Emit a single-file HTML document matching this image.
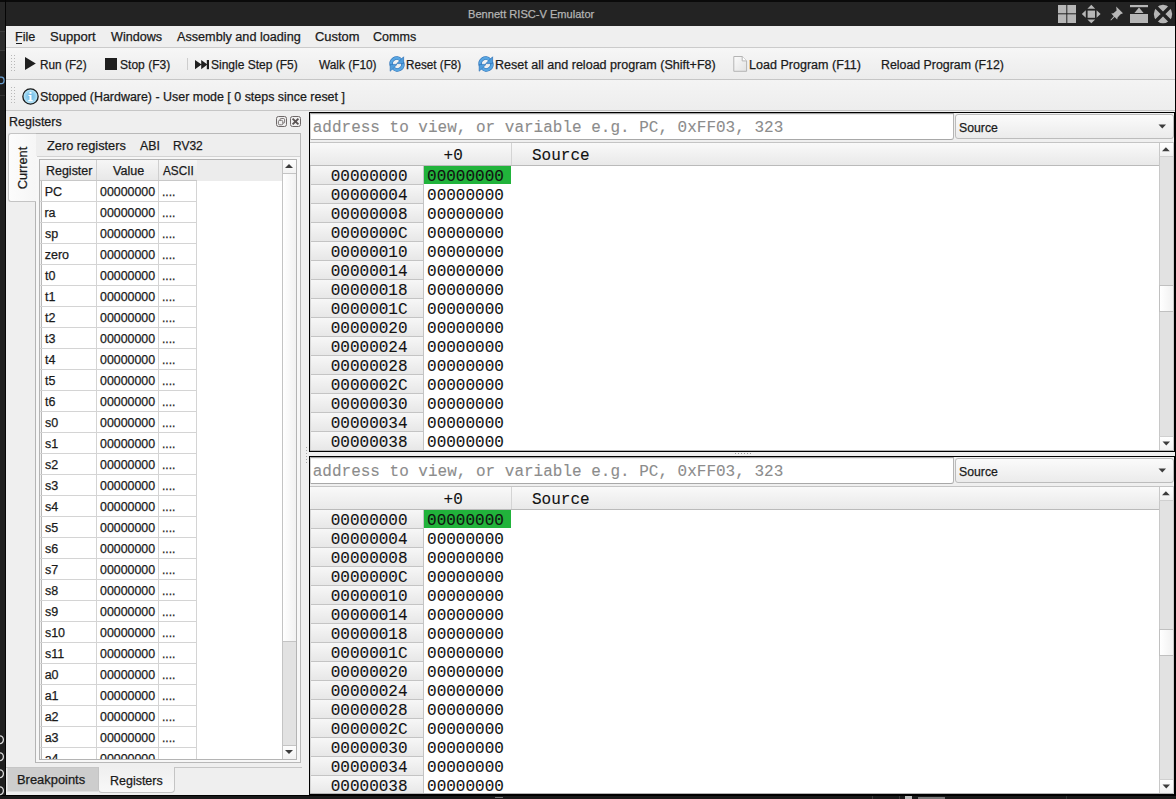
<!DOCTYPE html>
<html><head><meta charset="utf-8"><style>
html,body{margin:0;padding:0;width:1176px;height:799px;overflow:hidden;background:#1b1b1b}
div,span,svg{position:absolute;display:block}
span{white-space:nowrap;-webkit-text-stroke:0.25px currentColor}
</style></head><body>
<div style="left:0px;top:0px;width:6px;height:799px;background:#1f1f1f"></div>
<div style="left:0px;top:795px;width:1176px;height:1px;background:#000"></div>
<div style="left:0px;top:796px;width:1176px;height:3px;background:#1a1a1a"></div>
<div style="left:0px;top:0px;width:5px;height:31px;background:#262626"></div>
<div style="left:0px;top:31px;width:5px;height:1px;background:#3e3e3e"></div>
<div style="left:0px;top:32px;width:5px;height:18px;background:#2c2c2c"></div>
<div style="left:0px;top:50px;width:5px;height:1px;background:#3e3e3e"></div>
<div style="left:0px;top:51px;width:5px;height:9px;background:#242424"></div>
<div style="left:0px;top:60px;width:5px;height:30px;background:#1e1e1e"></div>
<svg style="left:0px;top:75.5px" width="5" height="9"><path d="M0 1.2 H1.5 A2.6 3.2 0 0 1 1.5 7.6 H0" fill="none" stroke="#6a9fd0" stroke-width="1.2"/></svg>
<div style="left:0px;top:95px;width:5px;height:1px;background:#333"></div>
<svg style="left:0px;top:734.5px" width="5" height="10"><path d="M0 0.8 A3.4 3.9 0 0 1 0 8.6" fill="none" stroke="#d8d8d8" stroke-width="1.3"/></svg>
<svg style="left:0px;top:751.5px" width="5" height="10"><path d="M0 0.8 A3.4 3.9 0 0 1 0 8.6" fill="none" stroke="#d8d8d8" stroke-width="1.3"/></svg>
<svg style="left:0px;top:769.0px" width="5" height="10"><path d="M0 0.8 A3.4 3.9 0 0 1 0 8.6" fill="none" stroke="#d8d8d8" stroke-width="1.3"/></svg>
<svg style="left:0px;top:785.5px" width="5" height="10"><path d="M0 0.8 A3.4 3.9 0 0 1 0 8.6" fill="none" stroke="#d8d8d8" stroke-width="1.3"/></svg>
<div style="left:872px;top:796px;width:1px;height:3px;background:#3a3a3a"></div>
<div style="left:899px;top:796px;width:1px;height:3px;background:#3a3a3a"></div>
<div style="left:905px;top:796px;width:7px;height:3px;background:#bdbdbd"></div>
<div style="left:918px;top:797px;width:27px;height:2px;background:#7a7a7a"></div>
<div style="left:1066px;top:796px;width:1px;height:3px;background:#333"></div>
<div style="left:495px;top:797px;width:8px;height:1px;background:#777"></div>
<div style="left:0px;top:0px;width:1176px;height:2px;background:#0a0a0a"></div>
<div style="left:5px;top:0px;width:1px;height:796px;background:#050505"></div>
<div style="left:6px;top:2px;width:1170px;height:24px;background:#232323"></div>
<span style="left:467.79px;top:8.60px;font-size:11.1px;line-height:11.1px;font-family:'Liberation Sans', sans-serif;color:#b4b4b4;transform:scaleX(0.9993);transform-origin:0 0;">Bennett RISC-V Emulator</span>
<svg style="left:1050px;top:0px" width="126" height="26" viewBox="0 0 126 26"><g fill="#b6b6b6"><rect x="8" y="5" width="8.3" height="8.3"/><rect x="17.3" y="5" width="8.7" height="8.3"/><rect x="8" y="14.3" width="8.3" height="8.7"/><rect x="17.3" y="14.3" width="8.7" height="8.7"/><rect x="37.6" y="10.6" width="7.4" height="7.2"/><path d="M41.3 4.8 L45.2 8.8 H37.4Z M41.3 23.2 L45.2 19.4 H37.4Z M31.8 14 L35.8 10.2 V17.8Z M50.6 14 L46.6 10.2 V17.8Z"/><path d="M66.2 6.6 L73 13.2 L70.6 14.2 L67.6 17.4 L67.2 19.6 L64.6 17 L61 20.6 L60.4 20 L63.8 16.2 L61.2 13.6 L63.4 13.2 L66.6 10.4Z"/><rect x="80" y="5" width="18" height="2.2"/><path d="M89 7.6 L93.6 12.9 H84.4Z"/><rect x="80" y="14" width="18" height="9"/><circle cx="113" cy="14" r="9.2"/></g><path d="M106 7 L120 21 M120 7 L106 21" stroke="#232323" stroke-width="3.4"/></svg>
<div style="left:6px;top:26px;width:1170px;height:769px;background:#efefef"></div>
<div style="left:6px;top:47px;width:1170px;height:1px;background:#cbcbcb"></div>
<span style="left:15.47px;top:31.42px;font-size:12.5px;line-height:12.5px;font-family:'Liberation Sans', sans-serif;color:#1a1a1a;transform:scaleX(1.0067);transform-origin:0 0;">File</span>
<span style="left:50.43px;top:31.42px;font-size:12.5px;line-height:12.5px;font-family:'Liberation Sans', sans-serif;color:#1a1a1a;transform:scaleX(1.0429);transform-origin:0 0;">Support</span>
<span style="left:111.35px;top:31.42px;font-size:12.5px;line-height:12.5px;font-family:'Liberation Sans', sans-serif;color:#1a1a1a;transform:scaleX(1.0080);transform-origin:0 0;">Windows</span>
<span style="left:177.07px;top:31.42px;font-size:12.5px;line-height:12.5px;font-family:'Liberation Sans', sans-serif;color:#1a1a1a;transform:scaleX(1.0117);transform-origin:0 0;">Assembly and loading</span>
<span style="left:314.76px;top:31.42px;font-size:12.5px;line-height:12.5px;font-family:'Liberation Sans', sans-serif;color:#1a1a1a;transform:scaleX(1.0306);transform-origin:0 0;">Custom</span>
<span style="left:372.67px;top:31.42px;font-size:12.5px;line-height:12.5px;font-family:'Liberation Sans', sans-serif;color:#1a1a1a;transform:scaleX(1.0030);transform-origin:0 0;">Comms</span>
<div style="left:16px;top:43px;width:6px;height:1px;background:#1a1a1a"></div>
<div style="left:6px;top:48px;width:1170px;height:31px;background:linear-gradient(#f6f6f6,#ececec)"></div>
<div style="left:6px;top:79px;width:1170px;height:1px;background:#c6c6c6"></div>
<div style="left:11px;top:55px;width:1px;height:1px;background:#b8b8b8"></div>
<div style="left:14px;top:55px;width:1px;height:1px;background:#b8b8b8"></div>
<div style="left:11px;top:58px;width:1px;height:1px;background:#b8b8b8"></div>
<div style="left:14px;top:58px;width:1px;height:1px;background:#b8b8b8"></div>
<div style="left:11px;top:61px;width:1px;height:1px;background:#b8b8b8"></div>
<div style="left:14px;top:61px;width:1px;height:1px;background:#b8b8b8"></div>
<div style="left:11px;top:64px;width:1px;height:1px;background:#b8b8b8"></div>
<div style="left:14px;top:64px;width:1px;height:1px;background:#b8b8b8"></div>
<div style="left:11px;top:67px;width:1px;height:1px;background:#b8b8b8"></div>
<div style="left:14px;top:67px;width:1px;height:1px;background:#b8b8b8"></div>
<div style="left:11px;top:70px;width:1px;height:1px;background:#b8b8b8"></div>
<div style="left:14px;top:70px;width:1px;height:1px;background:#b8b8b8"></div>
<svg style="left:25px;top:57px" width="12" height="14"><path d="M0 0 L10.8 6.5 L0 13Z" fill="#1f1f1f"/></svg>
<span style="left:39.53px;top:59.42px;font-size:12.5px;line-height:12.5px;font-family:'Liberation Sans', sans-serif;color:#1a1a1a;transform:scaleX(0.9448);transform-origin:0 0;">Run (F2)</span>
<div style="left:105px;top:58px;width:12px;height:12px;background:#1f1f1f"></div>
<span style="left:120.47px;top:59.42px;font-size:12.5px;line-height:12.5px;font-family:'Liberation Sans', sans-serif;color:#1a1a1a;transform:scaleX(0.9646);transform-origin:0 0;">Stop (F3)</span>
<div style="left:187px;top:58px;width:1px;height:12px;background:#cdcdcd"></div>
<svg style="left:194.8px;top:59.8px" width="16" height="10"><path d="M0 0 L6.6 4.6 L0 9.2Z M6.2 0 L12.4 4.6 L6.2 9.2Z" fill="#1f1f1f"/><rect x="11.8" y="0" width="2.2" height="9.2" fill="#1f1f1f"/></svg>
<span style="left:211.47px;top:59.42px;font-size:12.5px;line-height:12.5px;font-family:'Liberation Sans', sans-serif;color:#1a1a1a;transform:scaleX(0.9607);transform-origin:0 0;">Single Step (F5)</span>
<span style="left:319.15px;top:59.42px;font-size:12.5px;line-height:12.5px;font-family:'Liberation Sans', sans-serif;color:#1a1a1a;transform:scaleX(0.9490);transform-origin:0 0;">Walk (F10)</span>
<svg style="left:388.5px;top:56px" width="16" height="16" viewBox="0 0 16 16"><path d="M2.6 9.6 A5.4 5.4 0 0 1 11.6 3.9" fill="none" stroke="#2f72b8" stroke-width="3.6"/><path d="M13.4 6.4 A5.4 5.4 0 0 1 4.4 12.1" fill="none" stroke="#2f72b8" stroke-width="3.6"/><path d="M2.6 9.6 A5.4 5.4 0 0 1 11.6 3.9" fill="none" stroke="#58a6e2" stroke-width="2.4"/><path d="M13.4 6.4 A5.4 5.4 0 0 1 4.4 12.1" fill="none" stroke="#58a6e2" stroke-width="2.4"/><path d="M14.6 0.8 V7.6 H7.8Z" fill="#4f9ddc" stroke="#2f72b8" stroke-width="0.7"/><path d="M1.2 15.2 V8.4 H8Z" fill="#4f9ddc" stroke="#2f72b8" stroke-width="0.7"/></svg>
<span style="left:405.54px;top:59.42px;font-size:12.5px;line-height:12.5px;font-family:'Liberation Sans', sans-serif;color:#1a1a1a;transform:scaleX(0.9345);transform-origin:0 0;">Reset (F8)</span>
<svg style="left:478px;top:56px" width="16" height="16" viewBox="0 0 16 16"><path d="M2.6 9.6 A5.4 5.4 0 0 1 11.6 3.9" fill="none" stroke="#2f72b8" stroke-width="3.6"/><path d="M13.4 6.4 A5.4 5.4 0 0 1 4.4 12.1" fill="none" stroke="#2f72b8" stroke-width="3.6"/><path d="M2.6 9.6 A5.4 5.4 0 0 1 11.6 3.9" fill="none" stroke="#58a6e2" stroke-width="2.4"/><path d="M13.4 6.4 A5.4 5.4 0 0 1 4.4 12.1" fill="none" stroke="#58a6e2" stroke-width="2.4"/><path d="M14.6 0.8 V7.6 H7.8Z" fill="#4f9ddc" stroke="#2f72b8" stroke-width="0.7"/><path d="M1.2 15.2 V8.4 H8Z" fill="#4f9ddc" stroke="#2f72b8" stroke-width="0.7"/></svg>
<span style="left:495.17px;top:59.42px;font-size:12.5px;line-height:12.5px;font-family:'Liberation Sans', sans-serif;color:#1a1a1a;transform:scaleX(1.0037);transform-origin:0 0;">Reset all and reload program (Shift+F8)</span>
<svg style="left:732px;top:56px" width="16" height="16"><defs><linearGradient id="dg" x1="0" y1="0" x2="1" y2="1"><stop offset="0" stop-color="#fbfbfb"/><stop offset="1" stop-color="#e2e2e2"/></linearGradient></defs><path d="M1.8 0.5 H10.2 L14.6 4.9 V15.3 H1.8Z" fill="url(#dg)" stroke="#b4b4b4"/><path d="M10.2 0.5 V4.9 H14.6" fill="#fff" stroke="#b4b4b4"/></svg>
<span style="left:749.07px;top:59.42px;font-size:12.5px;line-height:12.5px;font-family:'Liberation Sans', sans-serif;color:#1a1a1a;transform:scaleX(1.0034);transform-origin:0 0;">Load Program (F11)</span>
<span style="left:881.49px;top:59.42px;font-size:12.5px;line-height:12.5px;font-family:'Liberation Sans', sans-serif;color:#1a1a1a;transform:scaleX(0.9888);transform-origin:0 0;">Reload Program (F12)</span>
<div style="left:6px;top:80px;width:1170px;height:30px;background:linear-gradient(#f4f4f4,#ededed)"></div>
<div style="left:6px;top:110px;width:1170px;height:1px;background:#c6c6c6"></div>
<div style="left:11px;top:87px;width:1px;height:1px;background:#b8b8b8"></div>
<div style="left:14px;top:87px;width:1px;height:1px;background:#b8b8b8"></div>
<div style="left:11px;top:90px;width:1px;height:1px;background:#b8b8b8"></div>
<div style="left:14px;top:90px;width:1px;height:1px;background:#b8b8b8"></div>
<div style="left:11px;top:93px;width:1px;height:1px;background:#b8b8b8"></div>
<div style="left:14px;top:93px;width:1px;height:1px;background:#b8b8b8"></div>
<div style="left:11px;top:96px;width:1px;height:1px;background:#b8b8b8"></div>
<div style="left:14px;top:96px;width:1px;height:1px;background:#b8b8b8"></div>
<div style="left:11px;top:99px;width:1px;height:1px;background:#b8b8b8"></div>
<div style="left:14px;top:99px;width:1px;height:1px;background:#b8b8b8"></div>
<div style="left:11px;top:102px;width:1px;height:1px;background:#b8b8b8"></div>
<div style="left:14px;top:102px;width:1px;height:1px;background:#b8b8b8"></div>
<svg style="left:21.6px;top:87.6px" width="17" height="17" viewBox="-0.4 -0.4 16.8 16.8"><defs><radialGradient id="ig" cx="0.5" cy="0.5" r="0.5"><stop offset="0" stop-color="#6fb6e6"/><stop offset="0.55" stop-color="#8ccdee"/><stop offset="1" stop-color="#c4ecfa"/></radialGradient></defs><circle cx="8" cy="8" r="7.55" fill="url(#ig)" stroke="#1a1a1a" stroke-width="1.3"/><rect x="7" y="3.5" width="2" height="1.8" fill="#fff"/><path d="M6 6.5 H9 V11.5 H10.2 V12.6 H5.8 V11.5 H7 V7.6 H6Z" fill="#fff"/></svg>
<span style="left:40.15px;top:91.42px;font-size:12.5px;line-height:12.5px;font-family:'Liberation Sans', sans-serif;color:#1a1a1a;transform:scaleX(0.9952);transform-origin:0 0;">Stopped (Hardware) - User mode [ 0 steps since reset ]</span>
<span style="left:9.38px;top:116.42px;font-size:12.5px;line-height:12.5px;font-family:'Liberation Sans', sans-serif;color:#1a1a1a;transform:scaleX(0.9976);transform-origin:0 0;">Registers</span>
<svg style="left:276px;top:116px" width="26" height="12"><rect x="0.5" y="0.5" width="10" height="10" rx="2" fill="none" stroke="#6e6868"/><rect x="4" y="2.5" width="4.6" height="4.6" rx="1.2" fill="none" stroke="#6e6868" stroke-width="0.9"/><rect x="2.4" y="4.4" width="4.4" height="4.4" rx="1.2" fill="#efefef" stroke="#6e6868" stroke-width="0.9"/><rect x="14.5" y="0.5" width="10" height="10" rx="2" fill="none" stroke="#6e6868"/><path d="M16.6 2.6 L22.4 8.4 M22.4 2.6 L16.6 8.4" stroke="#5a5454" stroke-width="1.9"/></svg>
<div style="left:35px;top:133px;width:266px;height:630px;background:#f7f7f7;border:1px solid #b8b8b8;border-left:none;box-sizing:border-box"></div>
<div style="left:35px;top:134px;width:1px;height:68px;background:#dcdcdc"></div>
<div style="left:35px;top:201px;width:1px;height:562px;background:#b4b4b4"></div>
<div style="left:8px;top:133px;width:28px;height:69px;background:linear-gradient(90deg,#fcfcfc,#f6f6f6);border:1px solid #c4c4c4;border-right:none;border-radius:3px 0 0 3px;box-sizing:border-box"></div>
<span style="left:9px;top:133.8px;width:27px;height:68px;"><span style="position:absolute;left:50%;top:50%;transform:translate(-50%,-50%) rotate(-90deg) scaleX(1.02);font-size:12.5px;line-height:14px;font-family:'Liberation Sans', sans-serif;color:#1a1a1a;white-space:nowrap">Current</span></span>
<div style="left:36px;top:134px;width:264px;height:22px;background:#eeeeee"></div>
<div style="left:37px;top:156px;width:263px;height:1px;background:#d2d2d2"></div>
<span style="left:46.82px;top:140.42px;font-size:12.5px;line-height:12.5px;font-family:'Liberation Sans', sans-serif;color:#1a1a1a;transform:scaleX(1.0226);transform-origin:0 0;">Zero registers</span>
<span style="left:140.18px;top:140.42px;font-size:12.5px;line-height:12.5px;font-family:'Liberation Sans', sans-serif;color:#1a1a1a;transform:scaleX(0.9855);transform-origin:0 0;">ABI</span>
<span style="left:173.22px;top:140.42px;font-size:12.5px;line-height:12.5px;font-family:'Liberation Sans', sans-serif;color:#1a1a1a;transform:scaleX(0.9558);transform-origin:0 0;">RV32</span>
<div style="left:39px;top:159px;width:258px;height:601px;background:#fff;border:1px solid #b4b4b4;box-sizing:border-box"></div>
<div style="left:40px;top:160px;width:242px;height:21px;background:#ececec"></div>
<div style="left:40px;top:160px;width:157px;height:20px;background:linear-gradient(#f6f6f6,#e8e8e8)"></div>
<div style="left:40px;top:180px;width:157px;height:1px;background:#c8c8c8"></div>
<div style="left:96px;top:160px;width:1px;height:20px;background:#cfcfcf"></div>
<div style="left:158px;top:160px;width:1px;height:20px;background:#cfcfcf"></div>
<span style="left:46.28px;top:165.42px;font-size:12.5px;line-height:12.5px;font-family:'Liberation Sans', sans-serif;color:#1a1a1a;transform:scaleX(0.9972);transform-origin:0 0;">Register</span>
<span style="left:112.65px;top:165.42px;font-size:12.5px;line-height:12.5px;font-family:'Liberation Sans', sans-serif;color:#1a1a1a;transform:scaleX(1.0049);transform-origin:0 0;">Value</span>
<span style="left:162.98px;top:165.42px;font-size:12.5px;line-height:12.5px;font-family:'Liberation Sans', sans-serif;color:#1a1a1a;transform:scaleX(0.9404);transform-origin:0 0;">ASCII</span>
<div style="left:40px;top:181px;width:1px;height:578px;background:#f2f2f2"></div>
<div style="left:41px;top:181px;width:1px;height:578px;background:#b8b8b8"></div>
<div style="left:40px;top:181px;width:242px;height:578px;overflow:hidden">
<div style="left:0px;top:20px;width:157px;height:1px;background:#d4d4d4"></div>
<span style="left:4.68px;top:5.42px;font-size:12.5px;line-height:12.5px;font-family:'Liberation Sans', sans-serif;color:#1a1a1a;">PC</span>
<span style="left:59.63px;top:5.42px;font-size:12.5px;line-height:12.5px;font-family:'Liberation Sans', sans-serif;color:#1a1a1a;transform:scaleX(0.9913);transform-origin:0 0;">00000000</span>
<span style="left:122.11px;top:5.42px;font-size:12.5px;line-height:12.5px;font-family:'Liberation Sans', sans-serif;color:#1a1a1a;transform:scaleX(0.9700);transform-origin:0 0;">....</span>
<div style="left:0px;top:41px;width:157px;height:1px;background:#d4d4d4"></div>
<span style="left:4.38px;top:26.42px;font-size:12.5px;line-height:12.5px;font-family:'Liberation Sans', sans-serif;color:#1a1a1a;">ra</span>
<span style="left:59.63px;top:26.42px;font-size:12.5px;line-height:12.5px;font-family:'Liberation Sans', sans-serif;color:#1a1a1a;transform:scaleX(0.9913);transform-origin:0 0;">00000000</span>
<span style="left:122.11px;top:26.42px;font-size:12.5px;line-height:12.5px;font-family:'Liberation Sans', sans-serif;color:#1a1a1a;transform:scaleX(0.9700);transform-origin:0 0;">....</span>
<div style="left:0px;top:62px;width:157px;height:1px;background:#d4d4d4"></div>
<span style="left:4.88px;top:47.42px;font-size:12.5px;line-height:12.5px;font-family:'Liberation Sans', sans-serif;color:#1a1a1a;">sp</span>
<span style="left:59.63px;top:47.42px;font-size:12.5px;line-height:12.5px;font-family:'Liberation Sans', sans-serif;color:#1a1a1a;transform:scaleX(0.9913);transform-origin:0 0;">00000000</span>
<span style="left:122.11px;top:47.42px;font-size:12.5px;line-height:12.5px;font-family:'Liberation Sans', sans-serif;color:#1a1a1a;transform:scaleX(0.9700);transform-origin:0 0;">....</span>
<div style="left:0px;top:83px;width:157px;height:1px;background:#d4d4d4"></div>
<span style="left:4.70px;top:68.42px;font-size:12.5px;line-height:12.5px;font-family:'Liberation Sans', sans-serif;color:#1a1a1a;">zero</span>
<span style="left:59.63px;top:68.42px;font-size:12.5px;line-height:12.5px;font-family:'Liberation Sans', sans-serif;color:#1a1a1a;transform:scaleX(0.9913);transform-origin:0 0;">00000000</span>
<span style="left:122.11px;top:68.42px;font-size:12.5px;line-height:12.5px;font-family:'Liberation Sans', sans-serif;color:#1a1a1a;transform:scaleX(0.9700);transform-origin:0 0;">....</span>
<div style="left:0px;top:104px;width:157px;height:1px;background:#d4d4d4"></div>
<span style="left:5.03px;top:89.42px;font-size:12.5px;line-height:12.5px;font-family:'Liberation Sans', sans-serif;color:#1a1a1a;">t0</span>
<span style="left:59.63px;top:89.42px;font-size:12.5px;line-height:12.5px;font-family:'Liberation Sans', sans-serif;color:#1a1a1a;transform:scaleX(0.9913);transform-origin:0 0;">00000000</span>
<span style="left:122.11px;top:89.42px;font-size:12.5px;line-height:12.5px;font-family:'Liberation Sans', sans-serif;color:#1a1a1a;transform:scaleX(0.9700);transform-origin:0 0;">....</span>
<div style="left:0px;top:125px;width:157px;height:1px;background:#d4d4d4"></div>
<span style="left:5.03px;top:110.42px;font-size:12.5px;line-height:12.5px;font-family:'Liberation Sans', sans-serif;color:#1a1a1a;">t1</span>
<span style="left:59.63px;top:110.42px;font-size:12.5px;line-height:12.5px;font-family:'Liberation Sans', sans-serif;color:#1a1a1a;transform:scaleX(0.9913);transform-origin:0 0;">00000000</span>
<span style="left:122.11px;top:110.42px;font-size:12.5px;line-height:12.5px;font-family:'Liberation Sans', sans-serif;color:#1a1a1a;transform:scaleX(0.9700);transform-origin:0 0;">....</span>
<div style="left:0px;top:146px;width:157px;height:1px;background:#d4d4d4"></div>
<span style="left:5.03px;top:131.42px;font-size:12.5px;line-height:12.5px;font-family:'Liberation Sans', sans-serif;color:#1a1a1a;">t2</span>
<span style="left:59.63px;top:131.42px;font-size:12.5px;line-height:12.5px;font-family:'Liberation Sans', sans-serif;color:#1a1a1a;transform:scaleX(0.9913);transform-origin:0 0;">00000000</span>
<span style="left:122.11px;top:131.42px;font-size:12.5px;line-height:12.5px;font-family:'Liberation Sans', sans-serif;color:#1a1a1a;transform:scaleX(0.9700);transform-origin:0 0;">....</span>
<div style="left:0px;top:167px;width:157px;height:1px;background:#d4d4d4"></div>
<span style="left:5.03px;top:152.42px;font-size:12.5px;line-height:12.5px;font-family:'Liberation Sans', sans-serif;color:#1a1a1a;">t3</span>
<span style="left:59.63px;top:152.42px;font-size:12.5px;line-height:12.5px;font-family:'Liberation Sans', sans-serif;color:#1a1a1a;transform:scaleX(0.9913);transform-origin:0 0;">00000000</span>
<span style="left:122.11px;top:152.42px;font-size:12.5px;line-height:12.5px;font-family:'Liberation Sans', sans-serif;color:#1a1a1a;transform:scaleX(0.9700);transform-origin:0 0;">....</span>
<div style="left:0px;top:188px;width:157px;height:1px;background:#d4d4d4"></div>
<span style="left:5.03px;top:173.42px;font-size:12.5px;line-height:12.5px;font-family:'Liberation Sans', sans-serif;color:#1a1a1a;">t4</span>
<span style="left:59.63px;top:173.42px;font-size:12.5px;line-height:12.5px;font-family:'Liberation Sans', sans-serif;color:#1a1a1a;transform:scaleX(0.9913);transform-origin:0 0;">00000000</span>
<span style="left:122.11px;top:173.42px;font-size:12.5px;line-height:12.5px;font-family:'Liberation Sans', sans-serif;color:#1a1a1a;transform:scaleX(0.9700);transform-origin:0 0;">....</span>
<div style="left:0px;top:209px;width:157px;height:1px;background:#d4d4d4"></div>
<span style="left:5.03px;top:194.42px;font-size:12.5px;line-height:12.5px;font-family:'Liberation Sans', sans-serif;color:#1a1a1a;">t5</span>
<span style="left:59.63px;top:194.42px;font-size:12.5px;line-height:12.5px;font-family:'Liberation Sans', sans-serif;color:#1a1a1a;transform:scaleX(0.9913);transform-origin:0 0;">00000000</span>
<span style="left:122.11px;top:194.42px;font-size:12.5px;line-height:12.5px;font-family:'Liberation Sans', sans-serif;color:#1a1a1a;transform:scaleX(0.9700);transform-origin:0 0;">....</span>
<div style="left:0px;top:230px;width:157px;height:1px;background:#d4d4d4"></div>
<span style="left:5.03px;top:215.42px;font-size:12.5px;line-height:12.5px;font-family:'Liberation Sans', sans-serif;color:#1a1a1a;">t6</span>
<span style="left:59.63px;top:215.42px;font-size:12.5px;line-height:12.5px;font-family:'Liberation Sans', sans-serif;color:#1a1a1a;transform:scaleX(0.9913);transform-origin:0 0;">00000000</span>
<span style="left:122.11px;top:215.42px;font-size:12.5px;line-height:12.5px;font-family:'Liberation Sans', sans-serif;color:#1a1a1a;transform:scaleX(0.9700);transform-origin:0 0;">....</span>
<div style="left:0px;top:251px;width:157px;height:1px;background:#d4d4d4"></div>
<span style="left:4.88px;top:236.42px;font-size:12.5px;line-height:12.5px;font-family:'Liberation Sans', sans-serif;color:#1a1a1a;">s0</span>
<span style="left:59.63px;top:236.42px;font-size:12.5px;line-height:12.5px;font-family:'Liberation Sans', sans-serif;color:#1a1a1a;transform:scaleX(0.9913);transform-origin:0 0;">00000000</span>
<span style="left:122.11px;top:236.42px;font-size:12.5px;line-height:12.5px;font-family:'Liberation Sans', sans-serif;color:#1a1a1a;transform:scaleX(0.9700);transform-origin:0 0;">....</span>
<div style="left:0px;top:272px;width:157px;height:1px;background:#d4d4d4"></div>
<span style="left:4.88px;top:257.42px;font-size:12.5px;line-height:12.5px;font-family:'Liberation Sans', sans-serif;color:#1a1a1a;">s1</span>
<span style="left:59.63px;top:257.42px;font-size:12.5px;line-height:12.5px;font-family:'Liberation Sans', sans-serif;color:#1a1a1a;transform:scaleX(0.9913);transform-origin:0 0;">00000000</span>
<span style="left:122.11px;top:257.42px;font-size:12.5px;line-height:12.5px;font-family:'Liberation Sans', sans-serif;color:#1a1a1a;transform:scaleX(0.9700);transform-origin:0 0;">....</span>
<div style="left:0px;top:293px;width:157px;height:1px;background:#d4d4d4"></div>
<span style="left:4.88px;top:278.42px;font-size:12.5px;line-height:12.5px;font-family:'Liberation Sans', sans-serif;color:#1a1a1a;">s2</span>
<span style="left:59.63px;top:278.42px;font-size:12.5px;line-height:12.5px;font-family:'Liberation Sans', sans-serif;color:#1a1a1a;transform:scaleX(0.9913);transform-origin:0 0;">00000000</span>
<span style="left:122.11px;top:278.42px;font-size:12.5px;line-height:12.5px;font-family:'Liberation Sans', sans-serif;color:#1a1a1a;transform:scaleX(0.9700);transform-origin:0 0;">....</span>
<div style="left:0px;top:314px;width:157px;height:1px;background:#d4d4d4"></div>
<span style="left:4.88px;top:299.42px;font-size:12.5px;line-height:12.5px;font-family:'Liberation Sans', sans-serif;color:#1a1a1a;">s3</span>
<span style="left:59.63px;top:299.42px;font-size:12.5px;line-height:12.5px;font-family:'Liberation Sans', sans-serif;color:#1a1a1a;transform:scaleX(0.9913);transform-origin:0 0;">00000000</span>
<span style="left:122.11px;top:299.42px;font-size:12.5px;line-height:12.5px;font-family:'Liberation Sans', sans-serif;color:#1a1a1a;transform:scaleX(0.9700);transform-origin:0 0;">....</span>
<div style="left:0px;top:335px;width:157px;height:1px;background:#d4d4d4"></div>
<span style="left:4.88px;top:320.42px;font-size:12.5px;line-height:12.5px;font-family:'Liberation Sans', sans-serif;color:#1a1a1a;">s4</span>
<span style="left:59.63px;top:320.42px;font-size:12.5px;line-height:12.5px;font-family:'Liberation Sans', sans-serif;color:#1a1a1a;transform:scaleX(0.9913);transform-origin:0 0;">00000000</span>
<span style="left:122.11px;top:320.42px;font-size:12.5px;line-height:12.5px;font-family:'Liberation Sans', sans-serif;color:#1a1a1a;transform:scaleX(0.9700);transform-origin:0 0;">....</span>
<div style="left:0px;top:356px;width:157px;height:1px;background:#d4d4d4"></div>
<span style="left:4.88px;top:341.42px;font-size:12.5px;line-height:12.5px;font-family:'Liberation Sans', sans-serif;color:#1a1a1a;">s5</span>
<span style="left:59.63px;top:341.42px;font-size:12.5px;line-height:12.5px;font-family:'Liberation Sans', sans-serif;color:#1a1a1a;transform:scaleX(0.9913);transform-origin:0 0;">00000000</span>
<span style="left:122.11px;top:341.42px;font-size:12.5px;line-height:12.5px;font-family:'Liberation Sans', sans-serif;color:#1a1a1a;transform:scaleX(0.9700);transform-origin:0 0;">....</span>
<div style="left:0px;top:377px;width:157px;height:1px;background:#d4d4d4"></div>
<span style="left:4.88px;top:362.42px;font-size:12.5px;line-height:12.5px;font-family:'Liberation Sans', sans-serif;color:#1a1a1a;">s6</span>
<span style="left:59.63px;top:362.42px;font-size:12.5px;line-height:12.5px;font-family:'Liberation Sans', sans-serif;color:#1a1a1a;transform:scaleX(0.9913);transform-origin:0 0;">00000000</span>
<span style="left:122.11px;top:362.42px;font-size:12.5px;line-height:12.5px;font-family:'Liberation Sans', sans-serif;color:#1a1a1a;transform:scaleX(0.9700);transform-origin:0 0;">....</span>
<div style="left:0px;top:398px;width:157px;height:1px;background:#d4d4d4"></div>
<span style="left:4.88px;top:383.42px;font-size:12.5px;line-height:12.5px;font-family:'Liberation Sans', sans-serif;color:#1a1a1a;">s7</span>
<span style="left:59.63px;top:383.42px;font-size:12.5px;line-height:12.5px;font-family:'Liberation Sans', sans-serif;color:#1a1a1a;transform:scaleX(0.9913);transform-origin:0 0;">00000000</span>
<span style="left:122.11px;top:383.42px;font-size:12.5px;line-height:12.5px;font-family:'Liberation Sans', sans-serif;color:#1a1a1a;transform:scaleX(0.9700);transform-origin:0 0;">....</span>
<div style="left:0px;top:419px;width:157px;height:1px;background:#d4d4d4"></div>
<span style="left:4.88px;top:404.42px;font-size:12.5px;line-height:12.5px;font-family:'Liberation Sans', sans-serif;color:#1a1a1a;">s8</span>
<span style="left:59.63px;top:404.42px;font-size:12.5px;line-height:12.5px;font-family:'Liberation Sans', sans-serif;color:#1a1a1a;transform:scaleX(0.9913);transform-origin:0 0;">00000000</span>
<span style="left:122.11px;top:404.42px;font-size:12.5px;line-height:12.5px;font-family:'Liberation Sans', sans-serif;color:#1a1a1a;transform:scaleX(0.9700);transform-origin:0 0;">....</span>
<div style="left:0px;top:440px;width:157px;height:1px;background:#d4d4d4"></div>
<span style="left:4.88px;top:425.42px;font-size:12.5px;line-height:12.5px;font-family:'Liberation Sans', sans-serif;color:#1a1a1a;">s9</span>
<span style="left:59.63px;top:425.42px;font-size:12.5px;line-height:12.5px;font-family:'Liberation Sans', sans-serif;color:#1a1a1a;transform:scaleX(0.9913);transform-origin:0 0;">00000000</span>
<span style="left:122.11px;top:425.42px;font-size:12.5px;line-height:12.5px;font-family:'Liberation Sans', sans-serif;color:#1a1a1a;transform:scaleX(0.9700);transform-origin:0 0;">....</span>
<div style="left:0px;top:461px;width:157px;height:1px;background:#d4d4d4"></div>
<span style="left:4.88px;top:446.42px;font-size:12.5px;line-height:12.5px;font-family:'Liberation Sans', sans-serif;color:#1a1a1a;">s10</span>
<span style="left:59.63px;top:446.42px;font-size:12.5px;line-height:12.5px;font-family:'Liberation Sans', sans-serif;color:#1a1a1a;transform:scaleX(0.9913);transform-origin:0 0;">00000000</span>
<span style="left:122.11px;top:446.42px;font-size:12.5px;line-height:12.5px;font-family:'Liberation Sans', sans-serif;color:#1a1a1a;transform:scaleX(0.9700);transform-origin:0 0;">....</span>
<div style="left:0px;top:482px;width:157px;height:1px;background:#d4d4d4"></div>
<span style="left:4.88px;top:467.42px;font-size:12.5px;line-height:12.5px;font-family:'Liberation Sans', sans-serif;color:#1a1a1a;">s11</span>
<span style="left:59.63px;top:467.42px;font-size:12.5px;line-height:12.5px;font-family:'Liberation Sans', sans-serif;color:#1a1a1a;transform:scaleX(0.9913);transform-origin:0 0;">00000000</span>
<span style="left:122.11px;top:467.42px;font-size:12.5px;line-height:12.5px;font-family:'Liberation Sans', sans-serif;color:#1a1a1a;transform:scaleX(0.9700);transform-origin:0 0;">....</span>
<div style="left:0px;top:503px;width:157px;height:1px;background:#d4d4d4"></div>
<span style="left:4.68px;top:488.42px;font-size:12.5px;line-height:12.5px;font-family:'Liberation Sans', sans-serif;color:#1a1a1a;">a0</span>
<span style="left:59.63px;top:488.42px;font-size:12.5px;line-height:12.5px;font-family:'Liberation Sans', sans-serif;color:#1a1a1a;transform:scaleX(0.9913);transform-origin:0 0;">00000000</span>
<span style="left:122.11px;top:488.42px;font-size:12.5px;line-height:12.5px;font-family:'Liberation Sans', sans-serif;color:#1a1a1a;transform:scaleX(0.9700);transform-origin:0 0;">....</span>
<div style="left:0px;top:524px;width:157px;height:1px;background:#d4d4d4"></div>
<span style="left:4.68px;top:509.42px;font-size:12.5px;line-height:12.5px;font-family:'Liberation Sans', sans-serif;color:#1a1a1a;">a1</span>
<span style="left:59.63px;top:509.42px;font-size:12.5px;line-height:12.5px;font-family:'Liberation Sans', sans-serif;color:#1a1a1a;transform:scaleX(0.9913);transform-origin:0 0;">00000000</span>
<span style="left:122.11px;top:509.42px;font-size:12.5px;line-height:12.5px;font-family:'Liberation Sans', sans-serif;color:#1a1a1a;transform:scaleX(0.9700);transform-origin:0 0;">....</span>
<div style="left:0px;top:545px;width:157px;height:1px;background:#d4d4d4"></div>
<span style="left:4.68px;top:530.42px;font-size:12.5px;line-height:12.5px;font-family:'Liberation Sans', sans-serif;color:#1a1a1a;">a2</span>
<span style="left:59.63px;top:530.42px;font-size:12.5px;line-height:12.5px;font-family:'Liberation Sans', sans-serif;color:#1a1a1a;transform:scaleX(0.9913);transform-origin:0 0;">00000000</span>
<span style="left:122.11px;top:530.42px;font-size:12.5px;line-height:12.5px;font-family:'Liberation Sans', sans-serif;color:#1a1a1a;transform:scaleX(0.9700);transform-origin:0 0;">....</span>
<div style="left:0px;top:566px;width:157px;height:1px;background:#d4d4d4"></div>
<span style="left:4.68px;top:551.42px;font-size:12.5px;line-height:12.5px;font-family:'Liberation Sans', sans-serif;color:#1a1a1a;">a3</span>
<span style="left:59.63px;top:551.42px;font-size:12.5px;line-height:12.5px;font-family:'Liberation Sans', sans-serif;color:#1a1a1a;transform:scaleX(0.9913);transform-origin:0 0;">00000000</span>
<span style="left:122.11px;top:551.42px;font-size:12.5px;line-height:12.5px;font-family:'Liberation Sans', sans-serif;color:#1a1a1a;transform:scaleX(0.9700);transform-origin:0 0;">....</span>
<div style="left:0px;top:587px;width:157px;height:1px;background:#d4d4d4"></div>
<span style="left:4.68px;top:572.42px;font-size:12.5px;line-height:12.5px;font-family:'Liberation Sans', sans-serif;color:#1a1a1a;">a4</span>
<span style="left:59.63px;top:572.42px;font-size:12.5px;line-height:12.5px;font-family:'Liberation Sans', sans-serif;color:#1a1a1a;transform:scaleX(0.9913);transform-origin:0 0;">00000000</span>
<span style="left:122.11px;top:572.42px;font-size:12.5px;line-height:12.5px;font-family:'Liberation Sans', sans-serif;color:#1a1a1a;transform:scaleX(0.9700);transform-origin:0 0;">....</span>
<div style="left:56px;top:0px;width:1px;height:578px;background:#d4d4d4"></div>
<div style="left:118px;top:0px;width:1px;height:578px;background:#d4d4d4"></div>
<div style="left:156px;top:0px;width:1px;height:578px;background:#d4d4d4"></div>
</div>
<div style="left:282px;top:160px;width:14px;height:599px;background:#e2e2e2;border-left:1px solid #c4c4c4;box-sizing:border-box"></div>
<div style="left:282px;top:160px;width:14px;height:14px;background:linear-gradient(#fdfdfd,#f2f2f2);border-left:1px solid #c4c4c4;border-bottom:1px solid #c4c4c4;box-sizing:border-box"></div>
<div style="left:282px;top:174px;width:14px;height:468px;background:linear-gradient(90deg,#fff,#f1f1f1);border-left:1px solid #c4c4c4;border-bottom:1px solid #c4c4c4;box-sizing:border-box"></div>
<div style="left:282px;top:745px;width:14px;height:14px;background:linear-gradient(#fdfdfd,#f2f2f2);border-left:1px solid #c4c4c4;border-top:1px solid #c4c4c4;box-sizing:border-box"></div>
<svg style="left:285px;top:163px" width="8" height="6"><path d="M0 5 L4 1 L8 5Z" fill="#3c3c3c"/></svg>
<svg style="left:285px;top:749px" width="8" height="6"><path d="M0 1 L4 5 L8 1Z" fill="#3c3c3c"/></svg>
<div style="left:6px;top:767px;width:296px;height:1px;background:#c6c6c6"></div>
<div style="left:7px;top:768px;width:91px;height:24px;background:#cdcdcd;border-left:1px solid #dcdcdc;border-bottom:1px solid #dedede;box-sizing:border-box"></div>
<span style="left:17.34px;top:774.42px;font-size:12.5px;line-height:12.5px;font-family:'Liberation Sans', sans-serif;color:#1a1a1a;transform:scaleX(1.0322);transform-origin:0 0;">Breakpoints</span>
<div style="left:98px;top:767px;width:77px;height:26px;background:linear-gradient(#efefef,#f8f8f8);border:1px solid #c4c4c4;border-top:none;border-radius:0 0 4px 4px;box-sizing:border-box"></div>
<div style="left:99px;top:763px;width:75px;height:5px;background:#efefef"></div>
<span style="left:109.78px;top:775.42px;font-size:12.5px;line-height:12.5px;font-family:'Liberation Sans', sans-serif;color:#1a1a1a;transform:scaleX(0.9976);transform-origin:0 0;">Registers</span>
<div style="left:735px;top:453px;width:1px;height:1px;background:#9a9a9a"></div>
<div style="left:738px;top:453px;width:1px;height:1px;background:#9a9a9a"></div>
<div style="left:741px;top:453px;width:1px;height:1px;background:#9a9a9a"></div>
<div style="left:744px;top:453px;width:1px;height:1px;background:#9a9a9a"></div>
<div style="left:747px;top:453px;width:1px;height:1px;background:#9a9a9a"></div>
<div style="left:750px;top:453px;width:1px;height:1px;background:#9a9a9a"></div>
<div style="left:306px;top:447px;width:1px;height:1px;background:#a8a8a8"></div>
<div style="left:306px;top:450px;width:1px;height:1px;background:#a8a8a8"></div>
<div style="left:306px;top:453px;width:1px;height:1px;background:#a8a8a8"></div>
<div style="left:306px;top:456px;width:1px;height:1px;background:#a8a8a8"></div>
<div style="left:306px;top:459px;width:1px;height:1px;background:#a8a8a8"></div>
<div style="left:306px;top:462px;width:1px;height:1px;background:#a8a8a8"></div>
<div style="left:1175px;top:0px;width:1px;height:796px;background:#000"></div>
<div style="left:309px;top:112px;width:867px;height:340px;background:#000"></div>
<div style="left:310px;top:113px;width:864px;height:338px;background:#efefef"></div>
<div style="left:310px;top:113px;width:644px;height:27px;background:#fff;border-top:1px solid #a4a4a4;border-left:1px solid #d0d0d0;border-right:1px solid #b4b4b4;border-bottom:1px solid #a8a8a8;border-bottom-right-radius:3px;box-sizing:border-box"></div>
<div style="left:311px;top:114px;width:642px;height:1px;background:#ececec"></div>
<span style="left:312.76px;top:119.74px;font-size:16px;line-height:16px;font-family:'Liberation Mono', monospace;color:#8c8c8c;transform:scaleY(1.06);transform-origin:0 12.26px;-webkit-text-stroke:0.1px currentColor;">address to view, or variable e.g. PC, 0xFF03, 323</span>
<div style="left:955px;top:114px;width:219px;height:25px;background:linear-gradient(#fbfbfb,#ebebeb);border:1px solid #bcbcbc;border-radius:3px;box-sizing:border-box"></div>
<span style="left:958.71px;top:122.42px;font-size:12.5px;line-height:12.5px;font-family:'Liberation Sans', sans-serif;color:#1a1a1a;transform:scaleX(0.9805);transform-origin:0 0;">Source</span>
<svg style="left:1158px;top:124px" width="9" height="6"><path d="M0.5 0.5 L8 0.5 L4.25 4.5Z" fill="#3c3c3c"/></svg>
<div style="left:310px;top:142px;width:864px;height:309px;background:#fff"></div>
<div style="left:310px;top:142px;width:864px;height:1px;background:#c4c4c4"></div>
<div style="left:310px;top:143px;width:849px;height:22px;background:linear-gradient(#f9f9f9,#e9e9e9)"></div>
<div style="left:310px;top:165px;width:849px;height:1px;background:#bababa"></div>
<div style="left:511px;top:143px;width:1px;height:22px;background:#d4d4d4"></div>
<span style="left:443.60px;top:147.74px;font-size:16px;line-height:16px;font-family:'Liberation Mono', monospace;color:#111;transform:scaleY(1.06);transform-origin:0 12.26px;-webkit-text-stroke:0.1px currentColor;">+0</span>
<span style="left:531.99px;top:147.74px;font-size:16px;line-height:16px;font-family:'Liberation Mono', monospace;color:#111;transform:scaleY(1.06);transform-origin:0 12.26px;-webkit-text-stroke:0.1px currentColor;">Source</span>
<div style="left:310px;top:166px;width:850px;height:285px;overflow:hidden">
<div style="left:0px;top:0px;width:114px;height:19px;background:linear-gradient(#f7f7f7,#e7e7e7);border-bottom:1px solid #c4c4c4;border-right:1px solid #c4c4c4;box-sizing:border-box"></div>
<span style="left:20.74px;top:2.74px;font-size:16px;line-height:16px;font-family:'Liberation Mono', monospace;color:#111;transform:scaleY(1.06);transform-origin:0 12.26px;-webkit-text-stroke:0.1px currentColor;">00000000</span>
<div style="left:114px;top:0px;width:87px;height:18px;background:#21b33b"></div>
<span style="left:117.04px;top:2.74px;font-size:16px;line-height:16px;font-family:'Liberation Mono', monospace;color:#111;transform:scaleY(1.06);transform-origin:0 12.26px;-webkit-text-stroke:0.1px currentColor;">00000000</span>
<div style="left:0px;top:19px;width:114px;height:19px;background:linear-gradient(#f7f7f7,#e7e7e7);border-bottom:1px solid #c4c4c4;border-right:1px solid #c4c4c4;box-sizing:border-box"></div>
<span style="left:20.74px;top:21.74px;font-size:16px;line-height:16px;font-family:'Liberation Mono', monospace;color:#111;transform:scaleY(1.06);transform-origin:0 12.26px;-webkit-text-stroke:0.1px currentColor;">00000004</span>
<span style="left:117.04px;top:21.74px;font-size:16px;line-height:16px;font-family:'Liberation Mono', monospace;color:#111;transform:scaleY(1.06);transform-origin:0 12.26px;-webkit-text-stroke:0.1px currentColor;">00000000</span>
<div style="left:0px;top:38px;width:114px;height:19px;background:linear-gradient(#f7f7f7,#e7e7e7);border-bottom:1px solid #c4c4c4;border-right:1px solid #c4c4c4;box-sizing:border-box"></div>
<span style="left:20.74px;top:40.74px;font-size:16px;line-height:16px;font-family:'Liberation Mono', monospace;color:#111;transform:scaleY(1.06);transform-origin:0 12.26px;-webkit-text-stroke:0.1px currentColor;">00000008</span>
<span style="left:117.04px;top:40.74px;font-size:16px;line-height:16px;font-family:'Liberation Mono', monospace;color:#111;transform:scaleY(1.06);transform-origin:0 12.26px;-webkit-text-stroke:0.1px currentColor;">00000000</span>
<div style="left:0px;top:57px;width:114px;height:19px;background:linear-gradient(#f7f7f7,#e7e7e7);border-bottom:1px solid #c4c4c4;border-right:1px solid #c4c4c4;box-sizing:border-box"></div>
<span style="left:20.74px;top:59.74px;font-size:16px;line-height:16px;font-family:'Liberation Mono', monospace;color:#111;transform:scaleY(1.06);transform-origin:0 12.26px;-webkit-text-stroke:0.1px currentColor;">0000000C</span>
<span style="left:117.04px;top:59.74px;font-size:16px;line-height:16px;font-family:'Liberation Mono', monospace;color:#111;transform:scaleY(1.06);transform-origin:0 12.26px;-webkit-text-stroke:0.1px currentColor;">00000000</span>
<div style="left:0px;top:76px;width:114px;height:19px;background:linear-gradient(#f7f7f7,#e7e7e7);border-bottom:1px solid #c4c4c4;border-right:1px solid #c4c4c4;box-sizing:border-box"></div>
<span style="left:20.74px;top:78.74px;font-size:16px;line-height:16px;font-family:'Liberation Mono', monospace;color:#111;transform:scaleY(1.06);transform-origin:0 12.26px;-webkit-text-stroke:0.1px currentColor;">00000010</span>
<span style="left:117.04px;top:78.74px;font-size:16px;line-height:16px;font-family:'Liberation Mono', monospace;color:#111;transform:scaleY(1.06);transform-origin:0 12.26px;-webkit-text-stroke:0.1px currentColor;">00000000</span>
<div style="left:0px;top:95px;width:114px;height:19px;background:linear-gradient(#f7f7f7,#e7e7e7);border-bottom:1px solid #c4c4c4;border-right:1px solid #c4c4c4;box-sizing:border-box"></div>
<span style="left:20.74px;top:97.74px;font-size:16px;line-height:16px;font-family:'Liberation Mono', monospace;color:#111;transform:scaleY(1.06);transform-origin:0 12.26px;-webkit-text-stroke:0.1px currentColor;">00000014</span>
<span style="left:117.04px;top:97.74px;font-size:16px;line-height:16px;font-family:'Liberation Mono', monospace;color:#111;transform:scaleY(1.06);transform-origin:0 12.26px;-webkit-text-stroke:0.1px currentColor;">00000000</span>
<div style="left:0px;top:114px;width:114px;height:19px;background:linear-gradient(#f7f7f7,#e7e7e7);border-bottom:1px solid #c4c4c4;border-right:1px solid #c4c4c4;box-sizing:border-box"></div>
<span style="left:20.74px;top:116.74px;font-size:16px;line-height:16px;font-family:'Liberation Mono', monospace;color:#111;transform:scaleY(1.06);transform-origin:0 12.26px;-webkit-text-stroke:0.1px currentColor;">00000018</span>
<span style="left:117.04px;top:116.74px;font-size:16px;line-height:16px;font-family:'Liberation Mono', monospace;color:#111;transform:scaleY(1.06);transform-origin:0 12.26px;-webkit-text-stroke:0.1px currentColor;">00000000</span>
<div style="left:0px;top:133px;width:114px;height:19px;background:linear-gradient(#f7f7f7,#e7e7e7);border-bottom:1px solid #c4c4c4;border-right:1px solid #c4c4c4;box-sizing:border-box"></div>
<span style="left:20.74px;top:135.74px;font-size:16px;line-height:16px;font-family:'Liberation Mono', monospace;color:#111;transform:scaleY(1.06);transform-origin:0 12.26px;-webkit-text-stroke:0.1px currentColor;">0000001C</span>
<span style="left:117.04px;top:135.74px;font-size:16px;line-height:16px;font-family:'Liberation Mono', monospace;color:#111;transform:scaleY(1.06);transform-origin:0 12.26px;-webkit-text-stroke:0.1px currentColor;">00000000</span>
<div style="left:0px;top:152px;width:114px;height:19px;background:linear-gradient(#f7f7f7,#e7e7e7);border-bottom:1px solid #c4c4c4;border-right:1px solid #c4c4c4;box-sizing:border-box"></div>
<span style="left:20.74px;top:154.74px;font-size:16px;line-height:16px;font-family:'Liberation Mono', monospace;color:#111;transform:scaleY(1.06);transform-origin:0 12.26px;-webkit-text-stroke:0.1px currentColor;">00000020</span>
<span style="left:117.04px;top:154.74px;font-size:16px;line-height:16px;font-family:'Liberation Mono', monospace;color:#111;transform:scaleY(1.06);transform-origin:0 12.26px;-webkit-text-stroke:0.1px currentColor;">00000000</span>
<div style="left:0px;top:171px;width:114px;height:19px;background:linear-gradient(#f7f7f7,#e7e7e7);border-bottom:1px solid #c4c4c4;border-right:1px solid #c4c4c4;box-sizing:border-box"></div>
<span style="left:20.74px;top:173.74px;font-size:16px;line-height:16px;font-family:'Liberation Mono', monospace;color:#111;transform:scaleY(1.06);transform-origin:0 12.26px;-webkit-text-stroke:0.1px currentColor;">00000024</span>
<span style="left:117.04px;top:173.74px;font-size:16px;line-height:16px;font-family:'Liberation Mono', monospace;color:#111;transform:scaleY(1.06);transform-origin:0 12.26px;-webkit-text-stroke:0.1px currentColor;">00000000</span>
<div style="left:0px;top:190px;width:114px;height:19px;background:linear-gradient(#f7f7f7,#e7e7e7);border-bottom:1px solid #c4c4c4;border-right:1px solid #c4c4c4;box-sizing:border-box"></div>
<span style="left:20.74px;top:192.74px;font-size:16px;line-height:16px;font-family:'Liberation Mono', monospace;color:#111;transform:scaleY(1.06);transform-origin:0 12.26px;-webkit-text-stroke:0.1px currentColor;">00000028</span>
<span style="left:117.04px;top:192.74px;font-size:16px;line-height:16px;font-family:'Liberation Mono', monospace;color:#111;transform:scaleY(1.06);transform-origin:0 12.26px;-webkit-text-stroke:0.1px currentColor;">00000000</span>
<div style="left:0px;top:209px;width:114px;height:19px;background:linear-gradient(#f7f7f7,#e7e7e7);border-bottom:1px solid #c4c4c4;border-right:1px solid #c4c4c4;box-sizing:border-box"></div>
<span style="left:20.74px;top:211.74px;font-size:16px;line-height:16px;font-family:'Liberation Mono', monospace;color:#111;transform:scaleY(1.06);transform-origin:0 12.26px;-webkit-text-stroke:0.1px currentColor;">0000002C</span>
<span style="left:117.04px;top:211.74px;font-size:16px;line-height:16px;font-family:'Liberation Mono', monospace;color:#111;transform:scaleY(1.06);transform-origin:0 12.26px;-webkit-text-stroke:0.1px currentColor;">00000000</span>
<div style="left:0px;top:228px;width:114px;height:19px;background:linear-gradient(#f7f7f7,#e7e7e7);border-bottom:1px solid #c4c4c4;border-right:1px solid #c4c4c4;box-sizing:border-box"></div>
<span style="left:20.74px;top:230.74px;font-size:16px;line-height:16px;font-family:'Liberation Mono', monospace;color:#111;transform:scaleY(1.06);transform-origin:0 12.26px;-webkit-text-stroke:0.1px currentColor;">00000030</span>
<span style="left:117.04px;top:230.74px;font-size:16px;line-height:16px;font-family:'Liberation Mono', monospace;color:#111;transform:scaleY(1.06);transform-origin:0 12.26px;-webkit-text-stroke:0.1px currentColor;">00000000</span>
<div style="left:0px;top:247px;width:114px;height:19px;background:linear-gradient(#f7f7f7,#e7e7e7);border-bottom:1px solid #c4c4c4;border-right:1px solid #c4c4c4;box-sizing:border-box"></div>
<span style="left:20.74px;top:249.74px;font-size:16px;line-height:16px;font-family:'Liberation Mono', monospace;color:#111;transform:scaleY(1.06);transform-origin:0 12.26px;-webkit-text-stroke:0.1px currentColor;">00000034</span>
<span style="left:117.04px;top:249.74px;font-size:16px;line-height:16px;font-family:'Liberation Mono', monospace;color:#111;transform:scaleY(1.06);transform-origin:0 12.26px;-webkit-text-stroke:0.1px currentColor;">00000000</span>
<div style="left:0px;top:266px;width:114px;height:19px;background:linear-gradient(#f7f7f7,#e7e7e7);border-bottom:1px solid #c4c4c4;border-right:1px solid #c4c4c4;box-sizing:border-box"></div>
<span style="left:20.74px;top:268.74px;font-size:16px;line-height:16px;font-family:'Liberation Mono', monospace;color:#111;transform:scaleY(1.06);transform-origin:0 12.26px;-webkit-text-stroke:0.1px currentColor;">00000038</span>
<span style="left:117.04px;top:268.74px;font-size:16px;line-height:16px;font-family:'Liberation Mono', monospace;color:#111;transform:scaleY(1.06);transform-origin:0 12.26px;-webkit-text-stroke:0.1px currentColor;">00000000</span>
<div style="left:0px;top:285px;width:114px;height:19px;background:linear-gradient(#f7f7f7,#e7e7e7);border-bottom:1px solid #c4c4c4;border-right:1px solid #c4c4c4;box-sizing:border-box"></div>
<span style="left:20.74px;top:287.74px;font-size:16px;line-height:16px;font-family:'Liberation Mono', monospace;color:#111;transform:scaleY(1.06);transform-origin:0 12.26px;-webkit-text-stroke:0.1px currentColor;">0000003C</span>
<span style="left:117.04px;top:287.74px;font-size:16px;line-height:16px;font-family:'Liberation Mono', monospace;color:#111;transform:scaleY(1.06);transform-origin:0 12.26px;-webkit-text-stroke:0.1px currentColor;">00000000</span>
</div>
<div style="left:1159px;top:143px;width:15px;height:308px;background:#e2e2e2;border-left:1px solid #c8c8c8;box-sizing:border-box"></div>
<div style="left:1159px;top:143px;width:15px;height:14px;background:linear-gradient(#fff,#f0f0f0);border-left:1px solid #c8c8c8;border-bottom:1px solid #d0d0d0;box-sizing:border-box"></div>
<div style="left:1159px;top:436px;width:15px;height:15px;background:linear-gradient(#fff,#f0f0f0);border-left:1px solid #c8c8c8;border-top:1px solid #d0d0d0;box-sizing:border-box"></div>
<div style="left:1159px;top:285px;width:15px;height:27px;background:linear-gradient(90deg,#fff,#f0f0f0);border:1px solid #c0c0c0;border-right:none;box-sizing:border-box"></div>
<svg style="left:1162px;top:146.6px" width="9" height="6"><path d="M0 4.2 L3.9 0.2 L7.8 4.2Z" fill="#3c3c3c"/></svg>
<svg style="left:1162px;top:441px" width="9" height="6"><path d="M0.5 0.5 L8 0.5 L4.25 4.5Z" fill="#3c3c3c"/></svg>
<div style="left:310px;top:166px;width:1px;height:284px;background:#d6d6d6"></div>
<div style="left:310px;top:450px;width:864px;height:1px;background:#b4b4b4"></div>
<div style="left:1173px;top:142px;width:1px;height:309px;background:#c8c8c8"></div>
<div style="left:309px;top:456px;width:867px;height:339px;background:#000"></div>
<div style="left:310px;top:457px;width:864px;height:337px;background:#efefef"></div>
<div style="left:310px;top:457px;width:644px;height:27px;background:#fff;border-top:1px solid #a4a4a4;border-left:1px solid #d0d0d0;border-right:1px solid #b4b4b4;border-bottom:1px solid #a8a8a8;border-bottom-right-radius:3px;box-sizing:border-box"></div>
<div style="left:311px;top:458px;width:642px;height:1px;background:#ececec"></div>
<span style="left:312.76px;top:463.74px;font-size:16px;line-height:16px;font-family:'Liberation Mono', monospace;color:#8c8c8c;transform:scaleY(1.06);transform-origin:0 12.26px;-webkit-text-stroke:0.1px currentColor;">address to view, or variable e.g. PC, 0xFF03, 323</span>
<div style="left:955px;top:458px;width:219px;height:25px;background:linear-gradient(#fbfbfb,#ebebeb);border:1px solid #bcbcbc;border-radius:3px;box-sizing:border-box"></div>
<span style="left:958.71px;top:466.42px;font-size:12.5px;line-height:12.5px;font-family:'Liberation Sans', sans-serif;color:#1a1a1a;transform:scaleX(0.9805);transform-origin:0 0;">Source</span>
<svg style="left:1158px;top:468px" width="9" height="6"><path d="M0.5 0.5 L8 0.5 L4.25 4.5Z" fill="#3c3c3c"/></svg>
<div style="left:310px;top:486px;width:864px;height:308px;background:#fff"></div>
<div style="left:310px;top:486px;width:864px;height:1px;background:#c4c4c4"></div>
<div style="left:310px;top:487px;width:849px;height:22px;background:linear-gradient(#f9f9f9,#e9e9e9)"></div>
<div style="left:310px;top:509px;width:849px;height:1px;background:#bababa"></div>
<div style="left:511px;top:487px;width:1px;height:22px;background:#d4d4d4"></div>
<span style="left:443.60px;top:491.74px;font-size:16px;line-height:16px;font-family:'Liberation Mono', monospace;color:#111;transform:scaleY(1.06);transform-origin:0 12.26px;-webkit-text-stroke:0.1px currentColor;">+0</span>
<span style="left:531.99px;top:491.74px;font-size:16px;line-height:16px;font-family:'Liberation Mono', monospace;color:#111;transform:scaleY(1.06);transform-origin:0 12.26px;-webkit-text-stroke:0.1px currentColor;">Source</span>
<div style="left:310px;top:510px;width:850px;height:284px;overflow:hidden">
<div style="left:0px;top:0px;width:114px;height:19px;background:linear-gradient(#f7f7f7,#e7e7e7);border-bottom:1px solid #c4c4c4;border-right:1px solid #c4c4c4;box-sizing:border-box"></div>
<span style="left:20.74px;top:2.74px;font-size:16px;line-height:16px;font-family:'Liberation Mono', monospace;color:#111;transform:scaleY(1.06);transform-origin:0 12.26px;-webkit-text-stroke:0.1px currentColor;">00000000</span>
<div style="left:114px;top:0px;width:87px;height:18px;background:#21b33b"></div>
<span style="left:117.04px;top:2.74px;font-size:16px;line-height:16px;font-family:'Liberation Mono', monospace;color:#111;transform:scaleY(1.06);transform-origin:0 12.26px;-webkit-text-stroke:0.1px currentColor;">00000000</span>
<div style="left:0px;top:19px;width:114px;height:19px;background:linear-gradient(#f7f7f7,#e7e7e7);border-bottom:1px solid #c4c4c4;border-right:1px solid #c4c4c4;box-sizing:border-box"></div>
<span style="left:20.74px;top:21.74px;font-size:16px;line-height:16px;font-family:'Liberation Mono', monospace;color:#111;transform:scaleY(1.06);transform-origin:0 12.26px;-webkit-text-stroke:0.1px currentColor;">00000004</span>
<span style="left:117.04px;top:21.74px;font-size:16px;line-height:16px;font-family:'Liberation Mono', monospace;color:#111;transform:scaleY(1.06);transform-origin:0 12.26px;-webkit-text-stroke:0.1px currentColor;">00000000</span>
<div style="left:0px;top:38px;width:114px;height:19px;background:linear-gradient(#f7f7f7,#e7e7e7);border-bottom:1px solid #c4c4c4;border-right:1px solid #c4c4c4;box-sizing:border-box"></div>
<span style="left:20.74px;top:40.74px;font-size:16px;line-height:16px;font-family:'Liberation Mono', monospace;color:#111;transform:scaleY(1.06);transform-origin:0 12.26px;-webkit-text-stroke:0.1px currentColor;">00000008</span>
<span style="left:117.04px;top:40.74px;font-size:16px;line-height:16px;font-family:'Liberation Mono', monospace;color:#111;transform:scaleY(1.06);transform-origin:0 12.26px;-webkit-text-stroke:0.1px currentColor;">00000000</span>
<div style="left:0px;top:57px;width:114px;height:19px;background:linear-gradient(#f7f7f7,#e7e7e7);border-bottom:1px solid #c4c4c4;border-right:1px solid #c4c4c4;box-sizing:border-box"></div>
<span style="left:20.74px;top:59.74px;font-size:16px;line-height:16px;font-family:'Liberation Mono', monospace;color:#111;transform:scaleY(1.06);transform-origin:0 12.26px;-webkit-text-stroke:0.1px currentColor;">0000000C</span>
<span style="left:117.04px;top:59.74px;font-size:16px;line-height:16px;font-family:'Liberation Mono', monospace;color:#111;transform:scaleY(1.06);transform-origin:0 12.26px;-webkit-text-stroke:0.1px currentColor;">00000000</span>
<div style="left:0px;top:76px;width:114px;height:19px;background:linear-gradient(#f7f7f7,#e7e7e7);border-bottom:1px solid #c4c4c4;border-right:1px solid #c4c4c4;box-sizing:border-box"></div>
<span style="left:20.74px;top:78.74px;font-size:16px;line-height:16px;font-family:'Liberation Mono', monospace;color:#111;transform:scaleY(1.06);transform-origin:0 12.26px;-webkit-text-stroke:0.1px currentColor;">00000010</span>
<span style="left:117.04px;top:78.74px;font-size:16px;line-height:16px;font-family:'Liberation Mono', monospace;color:#111;transform:scaleY(1.06);transform-origin:0 12.26px;-webkit-text-stroke:0.1px currentColor;">00000000</span>
<div style="left:0px;top:95px;width:114px;height:19px;background:linear-gradient(#f7f7f7,#e7e7e7);border-bottom:1px solid #c4c4c4;border-right:1px solid #c4c4c4;box-sizing:border-box"></div>
<span style="left:20.74px;top:97.74px;font-size:16px;line-height:16px;font-family:'Liberation Mono', monospace;color:#111;transform:scaleY(1.06);transform-origin:0 12.26px;-webkit-text-stroke:0.1px currentColor;">00000014</span>
<span style="left:117.04px;top:97.74px;font-size:16px;line-height:16px;font-family:'Liberation Mono', monospace;color:#111;transform:scaleY(1.06);transform-origin:0 12.26px;-webkit-text-stroke:0.1px currentColor;">00000000</span>
<div style="left:0px;top:114px;width:114px;height:19px;background:linear-gradient(#f7f7f7,#e7e7e7);border-bottom:1px solid #c4c4c4;border-right:1px solid #c4c4c4;box-sizing:border-box"></div>
<span style="left:20.74px;top:116.74px;font-size:16px;line-height:16px;font-family:'Liberation Mono', monospace;color:#111;transform:scaleY(1.06);transform-origin:0 12.26px;-webkit-text-stroke:0.1px currentColor;">00000018</span>
<span style="left:117.04px;top:116.74px;font-size:16px;line-height:16px;font-family:'Liberation Mono', monospace;color:#111;transform:scaleY(1.06);transform-origin:0 12.26px;-webkit-text-stroke:0.1px currentColor;">00000000</span>
<div style="left:0px;top:133px;width:114px;height:19px;background:linear-gradient(#f7f7f7,#e7e7e7);border-bottom:1px solid #c4c4c4;border-right:1px solid #c4c4c4;box-sizing:border-box"></div>
<span style="left:20.74px;top:135.74px;font-size:16px;line-height:16px;font-family:'Liberation Mono', monospace;color:#111;transform:scaleY(1.06);transform-origin:0 12.26px;-webkit-text-stroke:0.1px currentColor;">0000001C</span>
<span style="left:117.04px;top:135.74px;font-size:16px;line-height:16px;font-family:'Liberation Mono', monospace;color:#111;transform:scaleY(1.06);transform-origin:0 12.26px;-webkit-text-stroke:0.1px currentColor;">00000000</span>
<div style="left:0px;top:152px;width:114px;height:19px;background:linear-gradient(#f7f7f7,#e7e7e7);border-bottom:1px solid #c4c4c4;border-right:1px solid #c4c4c4;box-sizing:border-box"></div>
<span style="left:20.74px;top:154.74px;font-size:16px;line-height:16px;font-family:'Liberation Mono', monospace;color:#111;transform:scaleY(1.06);transform-origin:0 12.26px;-webkit-text-stroke:0.1px currentColor;">00000020</span>
<span style="left:117.04px;top:154.74px;font-size:16px;line-height:16px;font-family:'Liberation Mono', monospace;color:#111;transform:scaleY(1.06);transform-origin:0 12.26px;-webkit-text-stroke:0.1px currentColor;">00000000</span>
<div style="left:0px;top:171px;width:114px;height:19px;background:linear-gradient(#f7f7f7,#e7e7e7);border-bottom:1px solid #c4c4c4;border-right:1px solid #c4c4c4;box-sizing:border-box"></div>
<span style="left:20.74px;top:173.74px;font-size:16px;line-height:16px;font-family:'Liberation Mono', monospace;color:#111;transform:scaleY(1.06);transform-origin:0 12.26px;-webkit-text-stroke:0.1px currentColor;">00000024</span>
<span style="left:117.04px;top:173.74px;font-size:16px;line-height:16px;font-family:'Liberation Mono', monospace;color:#111;transform:scaleY(1.06);transform-origin:0 12.26px;-webkit-text-stroke:0.1px currentColor;">00000000</span>
<div style="left:0px;top:190px;width:114px;height:19px;background:linear-gradient(#f7f7f7,#e7e7e7);border-bottom:1px solid #c4c4c4;border-right:1px solid #c4c4c4;box-sizing:border-box"></div>
<span style="left:20.74px;top:192.74px;font-size:16px;line-height:16px;font-family:'Liberation Mono', monospace;color:#111;transform:scaleY(1.06);transform-origin:0 12.26px;-webkit-text-stroke:0.1px currentColor;">00000028</span>
<span style="left:117.04px;top:192.74px;font-size:16px;line-height:16px;font-family:'Liberation Mono', monospace;color:#111;transform:scaleY(1.06);transform-origin:0 12.26px;-webkit-text-stroke:0.1px currentColor;">00000000</span>
<div style="left:0px;top:209px;width:114px;height:19px;background:linear-gradient(#f7f7f7,#e7e7e7);border-bottom:1px solid #c4c4c4;border-right:1px solid #c4c4c4;box-sizing:border-box"></div>
<span style="left:20.74px;top:211.74px;font-size:16px;line-height:16px;font-family:'Liberation Mono', monospace;color:#111;transform:scaleY(1.06);transform-origin:0 12.26px;-webkit-text-stroke:0.1px currentColor;">0000002C</span>
<span style="left:117.04px;top:211.74px;font-size:16px;line-height:16px;font-family:'Liberation Mono', monospace;color:#111;transform:scaleY(1.06);transform-origin:0 12.26px;-webkit-text-stroke:0.1px currentColor;">00000000</span>
<div style="left:0px;top:228px;width:114px;height:19px;background:linear-gradient(#f7f7f7,#e7e7e7);border-bottom:1px solid #c4c4c4;border-right:1px solid #c4c4c4;box-sizing:border-box"></div>
<span style="left:20.74px;top:230.74px;font-size:16px;line-height:16px;font-family:'Liberation Mono', monospace;color:#111;transform:scaleY(1.06);transform-origin:0 12.26px;-webkit-text-stroke:0.1px currentColor;">00000030</span>
<span style="left:117.04px;top:230.74px;font-size:16px;line-height:16px;font-family:'Liberation Mono', monospace;color:#111;transform:scaleY(1.06);transform-origin:0 12.26px;-webkit-text-stroke:0.1px currentColor;">00000000</span>
<div style="left:0px;top:247px;width:114px;height:19px;background:linear-gradient(#f7f7f7,#e7e7e7);border-bottom:1px solid #c4c4c4;border-right:1px solid #c4c4c4;box-sizing:border-box"></div>
<span style="left:20.74px;top:249.74px;font-size:16px;line-height:16px;font-family:'Liberation Mono', monospace;color:#111;transform:scaleY(1.06);transform-origin:0 12.26px;-webkit-text-stroke:0.1px currentColor;">00000034</span>
<span style="left:117.04px;top:249.74px;font-size:16px;line-height:16px;font-family:'Liberation Mono', monospace;color:#111;transform:scaleY(1.06);transform-origin:0 12.26px;-webkit-text-stroke:0.1px currentColor;">00000000</span>
<div style="left:0px;top:266px;width:114px;height:19px;background:linear-gradient(#f7f7f7,#e7e7e7);border-bottom:1px solid #c4c4c4;border-right:1px solid #c4c4c4;box-sizing:border-box"></div>
<span style="left:20.74px;top:268.74px;font-size:16px;line-height:16px;font-family:'Liberation Mono', monospace;color:#111;transform:scaleY(1.06);transform-origin:0 12.26px;-webkit-text-stroke:0.1px currentColor;">00000038</span>
<span style="left:117.04px;top:268.74px;font-size:16px;line-height:16px;font-family:'Liberation Mono', monospace;color:#111;transform:scaleY(1.06);transform-origin:0 12.26px;-webkit-text-stroke:0.1px currentColor;">00000000</span>
<div style="left:0px;top:285px;width:114px;height:19px;background:linear-gradient(#f7f7f7,#e7e7e7);border-bottom:1px solid #c4c4c4;border-right:1px solid #c4c4c4;box-sizing:border-box"></div>
<span style="left:20.74px;top:287.74px;font-size:16px;line-height:16px;font-family:'Liberation Mono', monospace;color:#111;transform:scaleY(1.06);transform-origin:0 12.26px;-webkit-text-stroke:0.1px currentColor;">0000003C</span>
<span style="left:117.04px;top:287.74px;font-size:16px;line-height:16px;font-family:'Liberation Mono', monospace;color:#111;transform:scaleY(1.06);transform-origin:0 12.26px;-webkit-text-stroke:0.1px currentColor;">00000000</span>
</div>
<div style="left:1159px;top:487px;width:15px;height:307px;background:#e2e2e2;border-left:1px solid #c8c8c8;box-sizing:border-box"></div>
<div style="left:1159px;top:487px;width:15px;height:14px;background:linear-gradient(#fff,#f0f0f0);border-left:1px solid #c8c8c8;border-bottom:1px solid #d0d0d0;box-sizing:border-box"></div>
<div style="left:1159px;top:779px;width:15px;height:15px;background:linear-gradient(#fff,#f0f0f0);border-left:1px solid #c8c8c8;border-top:1px solid #d0d0d0;box-sizing:border-box"></div>
<div style="left:1159px;top:629px;width:15px;height:27px;background:linear-gradient(90deg,#fff,#f0f0f0);border:1px solid #c0c0c0;border-right:none;box-sizing:border-box"></div>
<svg style="left:1162px;top:490.6px" width="9" height="6"><path d="M0 4.2 L3.9 0.2 L7.8 4.2Z" fill="#3c3c3c"/></svg>
<svg style="left:1162px;top:784px" width="9" height="6"><path d="M0.5 0.5 L8 0.5 L4.25 4.5Z" fill="#3c3c3c"/></svg>
<div style="left:310px;top:510px;width:1px;height:283px;background:#d6d6d6"></div>
<div style="left:310px;top:793px;width:864px;height:1px;background:#b4b4b4"></div>
<div style="left:1173px;top:486px;width:1px;height:308px;background:#c8c8c8"></div>
</body></html>
